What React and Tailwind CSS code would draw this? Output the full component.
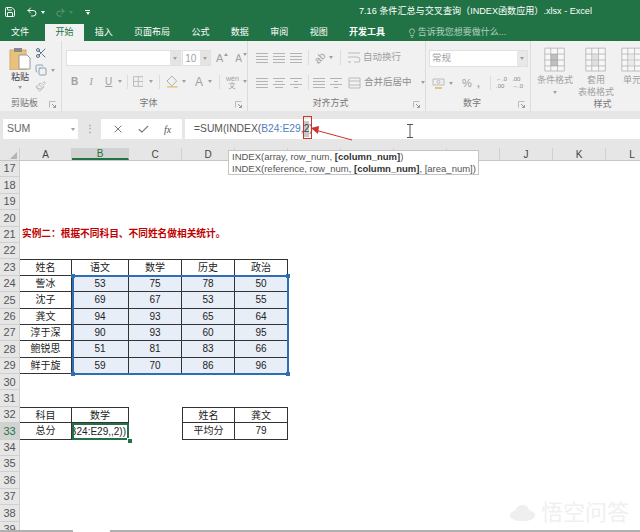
import React from 'react';
import { Save, Undo2, Redo2, Scissors, Copy, Paintbrush, X, Check, Lightbulb } from 'lucide-react';

const FONT = { fontFamily: '"Liberation Sans", "Noto Sans CJK SC", sans-serif' };

const tabs = ['插入', '页面布局', '公式', '数据', '审阅', '视图', '开发工具'];
const columns = [
    ['A', 'w-[52px]'], ['B', 'w-[57px]'], ['C', 'w-[53px]'], ['D', 'w-[53px]'], ['E', 'w-[53px]'], ['F', 'w-[53px]'],
    ['G', 'w-[53px]'], ['H', 'w-[53px]'], ['I', 'w-[53px]'], ['J', 'w-[53px]'], ['K', 'w-[53px]'], ['L', 'w-[53px]'],
];
const scores = [
    ['訾冰', '53', '75', '78', '50'],
    ['沈子', '69', '67', '53', '55'],
    ['龚文', '94', '93', '65', '64'],
    ['淳于深', '90', '93', '60', '95'],
    ['鲍锐思', '51', '81', '83', '66'],
    ['鲜于旋', '59', '70', '86', '96'],
];

function Caret({ className = '' }) {
    return <span className={`inline-block w-0 h-0 border-x-[2.5px] border-x-transparent border-t-[3px] border-t-[#a0a0a0] ${className}`} />;
}

function Launcher() {
    return (
        <svg width="7" height="7" viewBox="0 0 7 7" className="absolute right-[5px] bottom-[3px]">
            <path d="M0.5 6.5V0.5H6.5" fill="none" stroke="#bbb" />
            <path d="M3 3L6.5 6.5M6.5 4V6.5H4" fill="none" stroke="#999" />
        </svg>
    );
}

function Lines({ kind = 'left' }) {
    const x = kind === 'left' ? 1 : kind === 'center' ? 3 : 5;
    return (
        <svg width="14" height="11" viewBox="0 0 14 11" stroke="#b4b4b4">
            <path d={`M1 1.5H13M${x} 4.5H${14 - x}M1 7.5H13M${x} 10.5H${14 - x}`} />
        </svg>
    );
}

function TableIcon({ w = 26, h = 30, accent = '#8a8a8a' }) {
    return (
        <svg width={w} height={h} viewBox="0 0 26 30">
            <path d="M1 1H24V28H1ZM1 8H24M1 15H24M1 22H24M8 1V28M16 1V28" fill="#f7f7f7" stroke="#b4b4b4" />
            <path d="M8 8H16V22H8Z" fill={accent} opacity=".5" />
        </svg>
    );
}

function Group({ width, label, children }) {
    return (
        <div className={`relative flex flex-col shrink-0 border-r border-[#dcdcdc] ${width}`}>
            <div className="flex-1 min-h-0">{children}</div>
            <div className="h-[14px] flex items-center justify-center text-[9px] text-[#777] pr-[12px]">{label}</div>
            <Launcher />
        </div>
    );
}

function Ribbon() {
    return (
        <div className="flex h-[70px] bg-[#f1f1f1] text-[#a0a0a0] overflow-hidden">
            <Group width="w-[62px]" label="剪贴板">
                <div className="flex pl-[7px] pt-[6px]">
                    <div className="w-[26px] flex flex-col items-center">
                        <svg width="22" height="23" viewBox="0 0 22 23">
                            <rect x="1" y="3" width="16" height="20" fill="#e8c27c" stroke="#d0ab68" />
                            <rect x="5" y="1" width="8" height="4" fill="#8a8a8a" />
                            <path d="M10 8H18L21 11V22H10Z" fill="#fff" stroke="#999" />
                        </svg>
                        <span className="text-[9px] text-[#444] leading-[11px] mt-[2px] whitespace-nowrap">粘贴</span>
                        <Caret className="mt-[3px]" />
                    </div>
                    <div className="ml-[2px] flex flex-col items-start gap-[5px]">
                        <Scissors size={12} color="#55708c" />
                        <div className="flex items-center gap-[4px]">
                            <Copy size={12} color="#8aa0b4" />
                            <Caret className="border-t-[#666]" />
                        </div>
                        <Paintbrush size={11} color="#b8b8b8" />
                    </div>
                </div>
            </Group>
            <Group width="w-[186px]" label="字体">
                <div className="flex items-center pl-[4px] pt-[9px] gap-[1px]">
                    <div className="w-[116px] h-[16px] bg-white border border-[#e0e0e0] flex justify-end">
                        <div className="w-[10px] bg-[#e4e4e4] flex items-center justify-center"><Caret /></div>
                    </div>
                    <div className="w-[29px] h-[16px] bg-white border border-[#e0e0e0] flex justify-between items-center pl-[2px] text-[10px]">
                        10
                        <div className="w-[10px] h-full bg-[#e4e4e4] flex items-center justify-center"><Caret /></div>
                    </div>
                    <span className="ml-[4px] text-[11px]">A</span>
                    <Caret className="rotate-180 -mt-[8px]" />
                    <span className="ml-[6px] text-[10px]">A</span>
                    <Caret className="-mt-[8px]" />
                </div>
                <div className="flex items-center pl-[9px] pt-[8px] text-[10px] leading-[14px]">
                    <b className="w-[19px]">B</b>
                    <i className="w-[16px]" style={{ fontFamily: '"Liberation Serif", serif' }}>I</i>
                    <u className="w-[13px]">U</u>
                    <Caret />
                    <span className="w-px h-[14px] bg-[#dcdcdc] ml-[5px] mr-[5px]" />
                    <svg width="11" height="11" viewBox="0 0 11 11" fill="none" stroke="#bbb"><path d="M.5.5h10v10H.5zM5.5.5v10M.5 5.5h10" /></svg>
                    <Caret className="ml-[6px]" />
                    <span className="w-px h-[14px] bg-[#dcdcdc] ml-[6px] mr-[6px]" />
                    <svg width="13" height="13" viewBox="0 0 13 13" fill="none" stroke="#aaa"><path d="M6 1L11 6L6 11L1 6Z" /><path d="M1 12H12" stroke="#e8c27c" strokeWidth="1.5" /></svg>
                    <Caret className="ml-[3px]" />
                    <span className="ml-[9px] text-[12px]">A</span>
                    <Caret className="ml-[5px]" />
                    <span className="w-px h-[14px] bg-[#dcdcdc] ml-[7px] mr-[6px]" />
                    <span className="text-[7px] leading-[7px] text-center w-[12px]">wén<br />文</span>
                    <Caret className="ml-[5px] border-t-[#666]" />
                </div>
            </Group>
            <Group width="w-[178px]" label="对齐方式">
                <div className="flex items-center pl-[7px] pt-[9px]">
                    <div className="flex gap-[3px]"><Lines /><Lines /><Lines /></div>
                    <span className="w-px h-[15px] bg-[#dcdcdc] ml-[5px] mr-[5px]" />
                    <span className="text-[10px] -rotate-45 w-[12px]">ab</span>
                    <Caret className="ml-[3px]" />
                    <span className="w-px h-[15px] bg-[#dcdcdc] ml-[7px] mr-[6px]" />
                    <svg width="14" height="12" viewBox="0 0 14 12" fill="none" stroke="#bbb"><path d="M1 1H13M1 5H10Q13 5 13 8T10 10H7M1 10H4" /></svg>
                    <span className="ml-[2px] text-[9.5px] whitespace-nowrap">自动换行</span>
                </div>
                <div className="flex items-center pl-[7px] pt-[10px]">
                    <div className="flex gap-[3px]"><Lines kind="left" /><Lines kind="center" /><Lines kind="right" /></div>
                    <span className="w-px h-[15px] bg-[#dcdcdc] ml-[5px] mr-[3px]" />
                    <Lines /><span className="w-[3px]" /><Lines kind="right" />
                    <span className="w-[5px]" />
                    <svg width="13" height="12" viewBox="0 0 13 12" fill="none" stroke="#bbb"><path d="M1 1H12V11H1ZM1 4H12M1 8H12" /></svg>
                    <span className="ml-[3px] text-[9.5px] whitespace-nowrap text-[#8c8c8c]">合并后居中</span>
                    <Caret className="ml-[9px]" />
                </div>
            </Group>
            <Group width="w-[105px]" label="数字">
                <div className="pl-[3px] pt-[9px]">
                    <div className="w-[99px] h-[17px] bg-white border border-[#e0e0e0] flex justify-between items-center pl-[2px] text-[9.5px]">
                        常规
                        <div className="w-[10px] h-full bg-[#e8e8e8] flex items-center justify-center"><Caret /></div>
                    </div>
                </div>
                <div className="flex items-center pl-[6px] pt-[8px] text-[10px]">
                    <svg width="13" height="13" viewBox="0 0 13 13" fill="none" stroke="#bbb"><path d="M1 2H12V8H1Z" /><circle cx="6.5" cy="5" r="1.5" /><path d="M3 11H10" stroke="#e8c27c" strokeWidth="2" /></svg>
                    <Caret className="ml-[4px]" />
                    <span className="ml-[9px] text-[11px] w-[14px]">%</span>
                    <span className="font-bold ml-[1px] w-[8px]">,</span>
                    <span className="w-px h-[14px] bg-[#dcdcdc] ml-[5px] mr-[5px]" />
                    <span className="text-[6px] leading-[7px] w-[15px] text-[#888]">←.0<br />.00</span>
                    <span className="text-[6px] leading-[7px] ml-[1px] text-[#888]">.00<br />→.0</span>
                </div>
            </Group>
            <div className="relative flex flex-col flex-1 min-w-0">
                <div className="flex-1 flex pt-[6px] pl-[6px] text-[9px] leading-[12px] text-center">
                    <div className="w-[36px] shrink-0 flex flex-col items-center">
                        <TableIcon w={22} h={26} />
                        <span className="mt-[1px] whitespace-nowrap">条件格式</span>
                        <Caret className="mt-[5px]" />
                    </div>
                    <div className="w-[42px] shrink-0 ml-[2px] flex flex-col items-center">
                        <TableIcon w={22} h={26} accent="#c9c9c9" />
                        <span className="mt-[1px] whitespace-nowrap">套用</span>
                        <span className="whitespace-nowrap">表格格式</span>
                    </div>
                    <div className="shrink-0 ml-[4px] flex flex-col items-center">
                        <TableIcon w={22} h={26} accent="#dddddd" />
                        <span className="mt-[1px] whitespace-nowrap">单元</span>
                    </div>
                </div>
                <div className="h-[14px] flex items-center justify-center text-[9px] text-[#777] pl-[34px]">样式</div>
            </div>
        </div>
    );
}

function FormulaBar() {
    return (
        <div className="h-[37px] bg-[#e6e6e6] flex pt-[8px] pl-[3px] text-[#666]">
            <div className="w-[75px] h-[20px] bg-white flex items-center justify-between pl-[4px] pr-[3px] text-[10.5px]">
                SUM <Caret className="border-t-[#555]" />
            </div>
            <div className="w-[23px] h-[20px] flex items-center justify-center text-[#aaa] text-[10px] leading-[4px] font-bold">⋮</div>
            <div className="w-[81px] h-[20px] bg-white flex items-center justify-around px-[4px]">
                <X size={12} color="#777" />
                <Check size={13} color="#777" />
                <i className="text-[10px] text-[#555]" style={{ fontFamily: '"Liberation Serif", serif' }}>fx</i>
            </div>
            <div className="ml-[3px] flex-1 h-[20px] bg-white flex items-center pl-[9px] text-[10.3px] text-[#555] whitespace-nowrap">
                =SUM(INDEX(<span className="text-[#4f81bd]">B24:E29</span>,<span className="bg-[#c8c8c8] text-[#444]">2</span>)
            </div>
        </div>
    );
}

function Cell({ width, className = '', children }) {
    return <div className={`${width} h-full shrink-0 flex items-center justify-center ${className}`}>{children}</div>;
}

function Row({ num, active, children }) {
    return (
        <div className="flex h-[16.4px] text-[10px] text-[#222]">
            <div className={`w-[20px] shrink-0 flex items-center justify-center border-r border-b border-[#d0d0d0] text-[11px] ${active ? 'bg-[#d2d2d2] text-[#217346]' : 'bg-[#e6e6e6] text-[#555]'}`}>
                {num}
            </div>
            {children}
        </div>
    );
}

const w = (i) => columns[i][1];
const edge = 'border-r border-b border-[#333]';

function Sheet() {
    return (
        <div className="relative flex-1 min-h-0 overflow-hidden bg-white">
            <div className="flex h-[13px] bg-[#e6e6e6] text-[10px] text-[#444] border-b border-[#c6c6c6]">
                <div className="w-[20px] shrink-0 flex items-end justify-end border-r border-[#d0d0d0] pr-[2px] pb-[1px]">
                    <span className="w-0 h-0 border-l-[7px] border-l-transparent border-b-[7px] border-b-[#b4b4b4]" />
                </div>
                {columns.map(([name, width]) => (
                    <div key={name} className={`${width} shrink-0 flex items-center justify-center border-r border-[#d0d0d0] ${name === 'B' ? 'bg-[#d2d2d2] border-b-2 border-b-[#217346] text-[#217346]' : ''}`}>
                        {name}
                    </div>
                ))}
            </div>
            <div className="relative">
                {[17, 18, 19, 20].map((n) => <Row key={n} num={n} />)}
                <Row num={21}>
                    <div className="pl-[2px] flex items-center text-[9.7px] font-bold text-[#c00000] whitespace-nowrap">实例二：根据不同科目、不同姓名做相关统计。</div>
                </Row>
                <Row num={22} />
                <Row num={23}>
                    {['姓名', '语文', '数学', '历史', '政治'].map((t, i) => (
                        <Cell key={t} width={w(i)} className={`${edge} border-t`}>{t}</Cell>
                    ))}
                </Row>
                {scores.map((row, r) => (
                    <Row key={row[0]} num={24 + r}>
                        {row.map((t, i) => (
                            <Cell key={i} width={w(i)} className={`${edge} ${i > 0 ? 'bg-[#e8eef7]' : ''}`}>{t}</Cell>
                        ))}
                    </Row>
                ))}
                <Row num={30} />
                <Row num={31} />
                <Row num={32}>
                    <Cell width={w(0)} className={`${edge} border-t`}>科目</Cell>
                    <Cell width={w(1)} className={`${edge} border-t`}>数学</Cell>
                    <Cell width={w(2)} />
                    <Cell width={w(3)} className={`${edge} border-t border-l`}>姓名</Cell>
                    <Cell width={w(4)} className={`${edge} border-t`}>龚文</Cell>
                </Row>
                <Row num={33} active>
                    <Cell width={w(0)} className={edge}>总分</Cell>
                    <Cell width={w(1)} className="relative justify-end overflow-hidden border-2 border-[#217346] whitespace-nowrap pr-[1px]">B24:E29,,2))</Cell>
                    <Cell width={w(2)} />
                    <Cell width={w(3)} className={`${edge} border-l`}>平均分</Cell>
                    <Cell width={w(4)} className={edge}>79</Cell>
                </Row>
                {[34, 35, 36, 37, 38, 39].map((n) => <Row key={n} num={n} />)}
                {/* range selection over B24:E29 */}
                <div className="absolute left-[72px] top-[114px] w-[217px] h-[100px] border-2 border-[#2f6eb5]">
                    <span className="absolute -left-[3px] -top-[3px] w-[4px] h-[4px] bg-[#2f6eb5]" />
                    <span className="absolute -right-[3px] -top-[3px] w-[4px] h-[4px] bg-[#2f6eb5]" />
                    <span className="absolute -left-[3px] -bottom-[3px] w-[4px] h-[4px] bg-[#2f6eb5]" />
                    <span className="absolute -right-[3px] -bottom-[3px] w-[4px] h-[4px] bg-[#2f6eb5]" />
                </div>
                <span className="absolute left-[127px] top-[277px] w-[4px] h-[4px] bg-[#217346] border border-white box-content" />
            </div>
        </div>
    );
}

function App() {
    return (
        <div className="relative w-[640px] h-[532px] overflow-hidden flex flex-col bg-white" style={FONT}>
            <div className="h-[24px] bg-[#217346] flex items-center text-white shrink-0">
                <Save size={12} className="ml-[4px]" />
                <Undo2 size={12} className="ml-[10px]" />
                <Caret className="ml-[3px] border-t-white" />
                <Redo2 size={11} className="ml-[10px] opacity-30" />
                <Caret className="ml-[3px] opacity-40" />
                <span className="ml-[12px] flex flex-col items-center gap-[1px]">
                    <span className="w-[5px] h-px bg-white" />
                    <Caret className="border-t-white" />
                </span>
                <span className="ml-[269px] text-[9.1px] whitespace-nowrap">7.16 条件汇总与交叉查询（INDEX函数应用）.xlsx - Excel</span>
            </div>
            <div className="h-[17px] bg-[#217346] flex text-[9px] text-white whitespace-nowrap shrink-0">
                <div className="w-[45px] pl-[11px] flex items-center">文件</div>
                <div className="w-[39px] bg-[#f1f1f1] text-[#217346] flex items-center justify-center">开始</div>
                {tabs.map((t) => <div key={t} className={`px-[10.7px] flex items-center ${t === '开发工具' ? 'font-bold' : ''}`}>{t}</div>)}
                <div className="ml-[11px] flex items-center gap-[1px] text-[#b5d0c0]">
                    <Lightbulb size={10} />
                    告诉我您想要做什么...
                </div>
            </div>
            <Ribbon />
            <FormulaBar />
            <Sheet />
            <div className="h-[2px] shrink-0 flex">
                <div className="w-[73px] bg-[#b0b0b0]" />
                <div className="w-[37px] bg-white" />
                <div className="flex-1 bg-[#b0b0b0]" />
            </div>

            {/* red callout over the formula bar */}
            <div className="absolute left-[303px] top-[116px] w-[9px] h-[23px] border border-[#d0312d]" />
            <svg className="absolute left-[308px] top-[123px]" width="48" height="20" viewBox="0 0 48 20">
                <path d="M44 17L7 7" stroke="#d0312d" fill="none" />
                <path d="M3 5L11 3L10 11Z" fill="#d0312d" />
            </svg>
            {/* text cursor */}
            <svg className="absolute left-[406px] top-[124px]" width="8" height="14" viewBox="0 0 8 14" fill="none" stroke="#555">
                <path d="M1 .5H7M1 13.5H7M4 .5V13.5" />
            </svg>
            {/* function tooltip */}
            <div className="absolute left-[228px] top-[150px] w-[251px] h-[25px] bg-white border border-[#c4c4c4] pl-[3px] text-[9.5px] leading-[11.5px] text-[#555] whitespace-nowrap">
                <div>INDEX(array, row_num, <b className="text-[#333]">[column_num]</b>)</div>
                <div>INDEX(reference, row_num, <b className="text-[#333]">[column_num]</b>, [area_num])</div>
            </div>
            {/* watermark */}
            <div className="absolute left-[510px] top-[501px] flex items-center gap-[6px] text-[22px] leading-[24px] text-[#f0f0f0] whitespace-nowrap">
                <svg width="25" height="16" viewBox="0 0 25 16" fill="#efefef"><path d="M12.5 0C17 0 19 3 19 5C23 6 25 8 25 10C25 14 20 16 12.5 16S0 14 0 10C0 8 2 6 6 5C6 3 8 0 12.5 0Z" /></svg>
                悟空问答
            </div>
        </div>
    );
}

export default App;
